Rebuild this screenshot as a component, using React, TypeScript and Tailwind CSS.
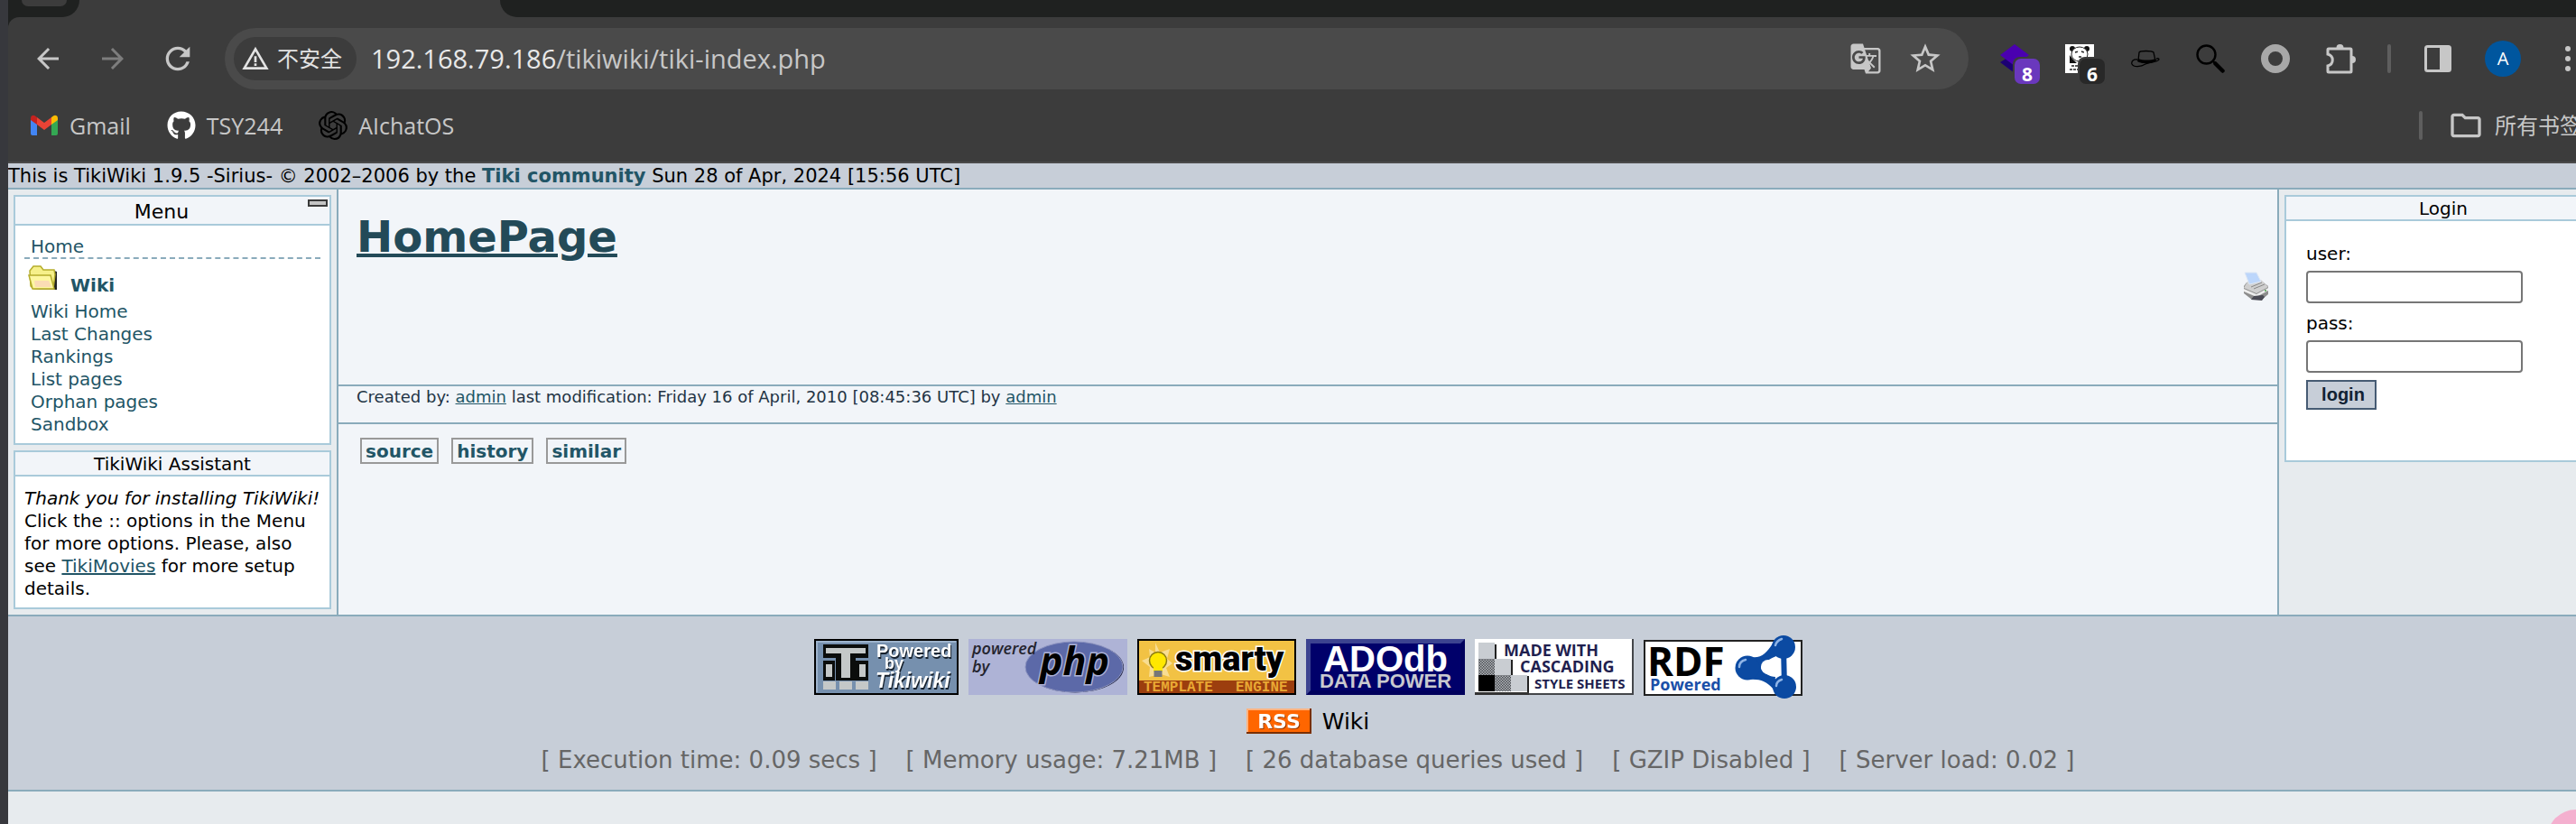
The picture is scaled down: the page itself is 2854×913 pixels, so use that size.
import type { ReactNode } from "react";
import { SiOpenai } from "react-icons/si";
import { FaGithub } from "react-icons/fa";
import {
  MdArrowBack,
  MdArrowForward,
  MdGTranslate,
  MdOutlineFolder,
  MdRefresh,
  MdStarBorder,
  MdWarningAmber,
} from "react-icons/md";

const LINK = "text-[#225566]";

function ToolCell({ label, children }: { label: string; children: ReactNode }) {
  return (
    <button aria-label={label} className="flex h-12 w-[72px] shrink-0 items-center justify-center">
      {children}
    </button>
  );
}

function GmailIcon() {
  return (
    <svg viewBox="0 0 32 24" className="h-6 w-8">
      <path d="M1 4v17a2 2 0 0 0 2 2h5V9z" fill="#4285f4" />
      <path d="M31 4v17a2 2 0 0 1-2 2h-5V9z" fill="#34a853" />
      <path d="M24 3v8l7-5V4c0-3-3-4-5-2.500z" fill="#fbbc04" />
      <path d="M8 11V3l8 6 8-6v8l-8 6z" fill="#ea4335" />
      <path d="M1 4v2l7 5V3L6 1.500C4 0 1 1 1 4z" fill="#c5221f" />
    </svg>
  );
}

function LayersIcon() {
  return (
    <svg viewBox="-10 -6 62 56" className="h-14 w-[62px] shrink-0">
      <path d="M4 26 20 16l16 10-16 12z" fill="#1c0074" />
      <path d="M20 6 36 18 20 30 4 18z" fill="#4a00b0" />
      <rect x="18" y="20" width="32" height="32" rx="8" fill="#3c3c3c" />
      <rect x="20" y="22" width="28" height="28" rx="7" fill="#6a38bd" />
      <text x="34" y="47" textAnchor="middle" fontSize="21" fontWeight="700" fontFamily="Open Sans, sans-serif" fill="#fff">8</text>
    </svg>
  );
}

function PandaIcon() {
  return (
    <svg viewBox="-10 -6 62 56" className="h-14 w-[62px] shrink-0">
      <rect x="4" y="6" width="32" height="32" fill="#fff" />
      <circle cx="12" cy="11" r="3" fill="#111" />
      <circle cx="28" cy="11" r="3" fill="#111" />
      <path d="M9 18v9h8l-4-4z" fill="#111" />
      <ellipse cx="20" cy="17" rx="9" ry="8" fill="#fff" stroke="#222" strokeWidth="1" />
      <path d="M15 15l4-1M22 14l3 1M19 20h4M11 30h10M9 34h9" stroke="#222" strokeWidth="1.500" strokeDasharray="3 1" />
      <rect x="18" y="20" width="32" height="32" rx="8" fill="#3c3c3c" />
      <rect x="20" y="22" width="28" height="28" rx="7" fill="#282828" />
      <text x="34" y="47" textAnchor="middle" fontSize="21" fontWeight="700" fontFamily="Open Sans, sans-serif" fill="#fff">6</text>
    </svg>
  );
}

function HatIcon() {
  return (
    <svg viewBox="0 0 32 20" className="h-5 w-8">
      <path d="M8 12 9 3c1-2 14-2 16 0l2 9c-4 3-14 4-19 0z" fill="none" stroke="#000" strokeWidth="1.300" />
      <path d="M8 10c5 2 14 2 19 0l1 2c-5 4-16 4-21 1z" fill="#000" />
      <path d="M7 11c-4-1-7 2-6 5 2 4 10 3 15 0 4-2 13-2 15-5 0-2-2-1-3-1" fill="none" stroke="#000" strokeWidth="1.300" />
    </svg>
  );
}

function MagnifierIcon() {
  return (
    <svg viewBox="0 0 32 32" className="size-8">
      <circle cx="11.500" cy="11.500" r="10" fill="none" stroke="#000" strokeWidth="2.400" />
      <path d="m18 18 4 4" stroke="#000" strokeWidth="2.400" />
      <path d="m21.500 21.500 8 8" stroke="#000" strokeWidth="4.500" strokeLinecap="round" />
    </svg>
  );
}

function PuzzleIcon() {
  return (
    <svg viewBox="0 0 36 36" className="size-9">
      <path
        d="M5 7h24a1 1 0 0 1 1 1v24a1 1 0 0 1-1 1H5a1 1 0 0 1-1-1v-6c7-2 7-11 0-13V8a1 1 0 0 1 1-1z"
        fill="none"
        stroke="#c7c7c7"
        strokeWidth="3"
      />
      <path d="M13.500 6a4 4 0 0 1 8 0zM31 15a4 4 0 0 1 0 8z" fill="#c7c7c7" />
    </svg>
  );
}

function PanelIcon() {
  return (
    <svg viewBox="0 0 30 30" className="size-[30px]">
      <rect x="1.500" y="1.500" width="27" height="27" rx="2" fill="none" stroke="#c7c7c7" strokeWidth="3" />
      <rect x="17" y="2" width="12" height="26" fill="#c7c7c7" />
    </svg>
  );
}

function FolderIcon() {
  return (
    <svg viewBox="0 0 32 28" className="h-7 w-8 shrink-0">
      <path d="M6 27h26V7l-3-1-2 18z" fill="#222" />
      <path d="M3 23 2 6l4-5h8l3 4h12l1 5-2 16H6z" fill="#f6f08a" stroke="#b5ad2c" strokeWidth="1.500" />
      <path d="M1 11h24l4 15H5z" fill="#fdf7a0" stroke="#b5ad2c" strokeWidth="1.500" />
      <path d="M7 17h16l3 7H8z" fill="#fbdcb4" />
    </svg>
  );
}

function PrinterIcon() {
  return (
    <svg viewBox="0 0 30 32" className="h-8 w-[30px]">
      <path d="M10 31 1 24v-8l3-4 16-2 8 6v9l-7 6z" fill="#8d8d8d" />
      <path d="M1 18 5 11l15-2 8 8-13 7z" fill="#cfcfcf" />
      <path d="M2 1h13l5 10-13 3z" fill="#bcd6fb" stroke="#dfe8f4" strokeWidth="1" />
      <path d="m1 19 14 6 13-7v3l-13 7-14-6z" fill="#ededed" />
      <path d="m9 17 12-5M12 19l12-5" stroke="#888" strokeWidth="1" />
      <path d="m9 31 3-4 10-1 2 2-3 4z" fill="#4b4b55" />
      <circle cx="25" cy="21" r="1" fill="#4aa04a" />
    </svg>
  );
}

function TikiBadge() {
  return (
    <svg viewBox="0 0 160 62" className="h-[62px] w-40">
      <rect x="1" y="1" width="158" height="60" fill="#7690ae" stroke="#000" strokeWidth="2" />
      <path d="M3 59V3h154" fill="none" stroke="#9db3cc" strokeWidth="2" />
      <path d="M10 6h50v15H46v25H24V21H10z" fill="#0b0d0c" />
      <path d="M13 10h44v6H40v27H30V16H13z" fill="#c4c8c8" />
      <path d="M10 24h13v22H10zM46 24h14v22H46z" fill="#0b0d0c" />
      <path d="M13 28h7v14h-7zM50 28h7v14h-7zM10 47h14v9H10zM28 47h14v9H28zM46 47h14v9H46z" fill="#c4c8c8" />
      <g fontFamily="Liberation Sans, sans-serif" fontWeight="700" fill="#fff" className="drop-shadow-[1px_2px_0_#16202c]">
        <text x="69" y="20" fontSize="20">Powered</text>
        <text x="78" y="33" fontSize="18">by</text>
        <text x="68" y="54" fontSize="23" fontStyle="italic">Tikiwiki</text>
      </g>
    </svg>
  );
}

function PhpBadge() {
  return (
    <svg viewBox="0 0 176 62" className="h-[62px] w-44">
      <rect width="176" height="62" fill="#aeb3d6" />
      <ellipse cx="118" cy="31.500" rx="54" ry="28" fill="#1c1f3d" />
      <ellipse cx="117" cy="31" rx="54" ry="28" fill="#5c69a8" stroke="#8c93c0" strokeWidth="1" />
      <g fontFamily="Open Sans, sans-serif" fontStyle="italic">
        <text x="4" y="17" fontSize="18" fontWeight="600" fill="#24242e">powered</text>
        <text x="4" y="37" fontSize="18" fontWeight="600" fill="#24242e">by</text>
        <text x="79" y="40" fontSize="43" fontWeight="700" fill="#000" stroke="#aeb3d6" strokeWidth="3" paintOrder="stroke">php</text>
      </g>
    </svg>
  );
}

function SmartyBadge() {
  return (
    <svg viewBox="0 0 176 62" className="h-[62px] w-44">
      <rect x="1" y="1" width="174" height="60" fill="#f2c244" stroke="#000" strokeWidth="2" />
      <rect x="2" y="46" width="172" height="14" fill="#9c3e0e" />
      <path d="m20 4 5 11 11-4-3 11 6 5-7 5 4 10-10-3-13 3 1-11-9-7 9-4-1-9 7 4z" fill="#f8dd92" />
      <circle cx="23" cy="24" r="9.500" fill="#ffe800" stroke="#8a7a10" strokeWidth="1.500" />
      <path d="M18 31h10v5H18z" fill="#ffe800" />
      <path d="M18.500 35h9v7h-9z" fill="#777" />
      <text x="42" y="35" fontSize="38" fontWeight="900" fontFamily="Roboto, sans-serif" fill="#000" stroke="#fff" strokeWidth="3" paintOrder="stroke">smarty</text>
      <g fontFamily="Liberation Mono, monospace" fontSize="16" fontWeight="700" fill="#e9a833">
        <text x="7" y="58">TEMPLATE</text>
        <text x="109" y="58">ENGINE</text>
      </g>
    </svg>
  );
}

function AdodbBadge() {
  return (
    <svg viewBox="0 0 176 62" className="h-[62px] w-44">
      <rect width="176" height="62" fill="#00005c" />
      <path d="M0 0h176l-5 5H5v52l-5 5z" fill="#3c4390" />
      <path d="M5 5h166v52H5z" fill="#00006a" />
      <g fontFamily="Liberation Sans, sans-serif" fontWeight="700">
        <text x="88" y="36" fontSize="40" textAnchor="middle" fill="#fff">ADOdb</text>
        <text x="88" y="54" fontSize="22" textAnchor="middle" fill="#c9c9cf">DATA POWER</text>
      </g>
    </svg>
  );
}

function CssBadge() {
  return (
    <svg viewBox="0 0 176 62" className="h-[62px] w-44">
      <defs>
        <pattern id="checks" width="3" height="3" patternUnits="userSpaceOnUse">
          <rect width="3" height="3" fill="#b4b8bd" />
          <path d="M0 0h1.500v1.500H0zM1.500 1.500H3V3H1.500z" fill="#4a4d52" />
        </pattern>
      </defs>
      <rect width="176" height="62" fill="#fff" />
      <path d="M175 0v61H0" fill="none" stroke="#44464a" strokeWidth="2" />
      <path d="M0 59h60v3H0z" fill="#333" />
      <path d="M22 6h2v16h-2zM40 23h2v17h-2zM58 41h2v18h-2z" fill="#222" />
      <path d="M4 4h18v18H4zM22 22h18v18H22zM40 40h18v18H40z" fill="#c9cdd2" />
      <path d="M4 22h18v18H4zM22 40h18v18H22z" fill="url(#checks)" />
      <path d="M4 40h18v18H4z" fill="#000" />
      <g fontFamily="Open Sans, sans-serif" fontWeight="700" fontSize="18" fill="#1f1f4f">
        <text x="32" y="19">MADE WITH</text>
        <text x="50" y="37">CASCADING</text>
        <text x="66" y="55" fontSize="15">STYLE SHEETS</text>
      </g>
    </svg>
  );
}

function RdfBadge() {
  return (
    <svg viewBox="0 0 176 72" className="h-[72px] w-44">
      <rect x="1" y="7" width="174" height="60" fill="#fff" stroke="#222" strokeWidth="2" />
      <path d="M115 37 155 14 156 58z" fill="#fff" stroke="#0b4aa2" strokeWidth="6" strokeLinejoin="round" />
      <g fill="#0b4aa2">
        <path d="M115 24c14 4 20-2 28-14l4 14c-6 2-16 8-17 13 1 5 10 10 16 10l-2 14c-8-10-16-12-29-11z" />
        <circle cx="115" cy="37" r="13.500" />
        <circle cx="155" cy="14" r="13" />
        <circle cx="156" cy="58" r="13" />
      </g>
      <circle cx="138" cy="36" r="8" fill="#fff" />
      <g fill="none" stroke="#8fb4e6" strokeWidth="2.500" strokeLinecap="round">
        <path d="M106 36c0-4 3-7 7-8M146 12c1-4 4-6 7-7M147 57c0-4 3-6 6-7" />
      </g>
      <text x="4" y="46" fontSize="44" fontWeight="700" fontFamily="Open Sans, sans-serif" fill="#000">RDF</text>
      <text x="7" y="62" fontSize="18" fontWeight="700" fontFamily="Open Sans, sans-serif" fill="#1a4fa8">Powered</text>
    </svg>
  );
}

function RssBadge() {
  return (
    <svg viewBox="0 0 72 28" className="h-7 w-[72px]">
      <rect width="72" height="28" fill="#7a2f00" />
      <rect width="70" height="26" fill="#ffb380" />
      <rect x="2" y="2" width="68" height="24" fill="#ff6600" />
      <text
        x="36"
        y="22"
        fontFamily="DejaVu Sans, sans-serif"
        fontWeight="700"
        fontSize="22"
        textAnchor="middle"
        fill="#fff"
        className="drop-shadow-[1px_1px_0_#9a3c00]"
      >
        RSS
      </text>
    </svg>
  );
}

function BrowserChrome() {
  return (
    <header className="bg-[#3c3c3c] font-['Open_Sans','Noto_Sans_CJK_SC',sans-serif] text-[#c7c7c7]">
      <div className="flex h-[19px] justify-between">
        <div className="w-[79px] rounded-br-[20px] bg-[#1f2120] pl-[15px]">
          <div className="h-[7px] w-[50px] rounded-b-xl bg-[#3c3c3c]" />
        </div>
        <div className="ml-[466px] flex-1 rounded-bl-[20px] bg-[#1f2120]" />
      </div>
      <div className="bg-[#1f2120]">
        <div className="flex items-center rounded-tl-xl bg-[#3c3c3c] py-3 pr-2 pl-2">
          <ToolCell label="Back">
            <MdArrowBack className="size-9" />
          </ToolCell>
          <ToolCell label="Forward">
            <MdArrowForward className="size-9 text-[#7d7d7d]" />
          </ToolCell>
          <ToolCell label="Reload">
            <MdRefresh className="size-10" />
          </ToolCell>
          <div className="mr-4 ml-4 flex h-[68px] flex-1 items-center rounded-full bg-[#4a4a4a] pr-7 pl-[10px]">
            <button className="flex h-12 items-center gap-2 rounded-full bg-[#3c3c3c] pr-4 pl-2 text-2xl text-[#e3e3e3]">
              <MdWarningAmber className="size-8" />
              不安全
            </button>
            <div className="ml-4 flex-1 text-[29px]">
              <span className="text-[#e8e8e8]">192.168.79.186</span>/tikiwiki/tiki-index.php
            </div>
            <button aria-label="Translate" className="mr-7">
              <MdGTranslate className="size-9" />
            </button>
            <button aria-label="Bookmark">
              <MdStarBorder className="size-10" />
            </button>
          </div>
          <ToolCell label="Layers extension">
            <LayersIcon />
          </ToolCell>
          <ToolCell label="Panda extension">
            <PandaIcon />
          </ToolCell>
          <ToolCell label="Hat extension">
            <HatIcon />
          </ToolCell>
          <ToolCell label="Search extension">
            <MagnifierIcon />
          </ToolCell>
          <ToolCell label="Ring extension">
            <span className="size-8 rounded-full border-8 border-[#a8a8a8]" />
          </ToolCell>
          <ToolCell label="Extensions">
            <PuzzleIcon />
          </ToolCell>
          <div className="flex w-9 shrink-0 justify-center">
            <span className="h-8 w-1 rounded-full bg-[#5e5e5e]" />
          </div>
          <ToolCell label="Side panel">
            <PanelIcon />
          </ToolCell>
          <ToolCell label="Profile">
            <span className="flex size-10 items-center justify-center rounded-full bg-[#00569e] text-xl text-white">A</span>
          </ToolCell>
          <ToolCell label="More">
            <span className="flex flex-col gap-[5px]">
              <span className="size-1.5 rounded-full bg-[#c7c7c7]" />
              <span className="size-1.5 rounded-full bg-[#c7c7c7]" />
              <span className="size-1.5 rounded-full bg-[#c7c7c7]" />
            </span>
          </ToolCell>
        </div>
      </div>
      <nav className="flex items-center gap-10 border-b-2 border-[#4a4a4a] pr-[29px] pb-3 pl-6 text-[25px] leading-[56px]">
        <a href="#gmail" className="flex items-center gap-3">
          <GmailIcon />
          Gmail
        </a>
        <a href="#github" className="flex items-center gap-3">
          <FaGithub className="size-8 text-white" />
          TSY244
        </a>
        <a href="#aichat" className="flex items-center gap-3">
          <SiOpenai className="size-8 text-black" />
          AIchatOS
        </a>
        <div className="ml-auto flex items-center">
          <span className="mr-7 h-8 w-1 rounded-full bg-[#5e5e5e]" />
          <button className="flex items-center gap-3 text-2xl leading-[56px]">
            <MdOutlineFolder className="size-10" />
            所有书签
          </button>
        </div>
      </nav>
    </header>
  );
}

function Module({ title, children }: { title: ReactNode; children: ReactNode }) {
  return (
    <section className="border-2 border-[#a9cada] bg-white">
      <div className="border-b-2 border-[#a9cada] bg-[#f2f5f9] text-center">{title}</div>
      {children}
    </section>
  );
}

function ModuleTitle({ children }: { children: ReactNode }) {
  return <h2 className="h-[25px] leading-[27px]">{children}</h2>;
}

const WIKI_LINKS = ["Wiki Home", "Last Changes", "Rankings", "List pages", "Orphan pages", "Sandbox"];
const PAGE_TABS = ["source", "history", "similar"];
const STATS = [
  "[ Execution time: 0.09 secs ]",
  "[ Memory usage: 7.21MB ]",
  "[ 26 database queries used ]",
  "[ GZIP Disabled ]",
  "[ Server load: 0.02 ]",
];

function LeftColumn() {
  return (
    <aside className="flex w-[366px] shrink-0 flex-col gap-1.5 border-r-2 border-[#8aabbb] p-1.5">
      <Module
        title={
          <div className="flex h-[30px] items-start">
            <h2 className="flex-1 text-[22px] leading-[34px]">Menu</h2>
            <button aria-label="Collapse menu" className="mt-[3px] mr-0.5 h-2 w-[22px] border-2 border-[#3a3a3a] bg-[#c4c4c4]" />
          </div>
        }
      >
        <nav className="px-2.5 pt-2.5 pb-2">
          <div className="h-[27px] border-b-2 border-dashed border-[#8aabbb] pl-[7px] leading-[27px]">
            <a href="#home" className={LINK}>Home</a>
          </div>
          <div className="flex h-[46px] gap-[15px] pt-[7px] pl-1">
            <FolderIcon />
            <a href="#wiki" className="pt-[10px] font-bold text-[#225566]">Wiki</a>
          </div>
          <ul className="pl-[7px]">
            {WIKI_LINKS.map((name) => (
              <li key={name}>
                <a href="#wiki" className={LINK}>{name}</a>
              </li>
            ))}
          </ul>
        </nav>
      </Module>
      <Module title={<ModuleTitle>TikiWiki Assistant</ModuleTitle>}>
        <p className="px-2.5 pt-3 pb-2">
          <i className="whitespace-nowrap">Thank you for installing TikiWiki!</i>
          <br />
          Click the :: options in the Menu
          <br />
          for more options. Please, also
          <br />
          see <a href="#movies" className="text-[#225566] underline">TikiMovies</a> for more setup
          <br />
          details.
        </p>
      </Module>
    </aside>
  );
}

function PageContent() {
  return (
    <main className="min-w-0 flex-1 bg-[#f2f5f9]">
      <div className="border-b-2 border-[#8aabbb] pt-6 pr-2 pb-[93px] pl-5">
        <h1 className="text-5xl leading-[56px] font-bold">
          <a href="#homepage" className="text-[#234a58] underline decoration-4">HomePage</a>
        </h1>
        <div className="mt-[11px] flex justify-end">
          <button aria-label="Print">
            <PrinterIcon />
          </button>
        </div>
      </div>
      <p className="border-b-2 border-[#8aabbb] pb-[17px] pt-px pl-5 text-lg leading-[22px] text-[#223344]">
        Created by: <a href="#admin" className="text-[#225566] underline">admin</a> last modification: Friday 16 of April, 2010
        [08:45:36 UTC] by <a href="#admin" className="text-[#225566] underline">admin</a>
      </p>
      <div className="flex gap-3.5 pt-[15px] pl-6">
        {PAGE_TABS.map((tab) => (
          <a key={tab} href="#tab" className="h-[29px] border-2 border-[#999] px-1 leading-[27px] font-bold text-[#225566]">{tab}</a>
        ))}
      </div>
    </main>
  );
}

function LoginColumn() {
  return (
    <aside className="w-[366px] shrink-0 border-l-2 border-[#8aabbb] p-1.5">
      <Module title={<ModuleTitle>Login</ModuleTitle>}>
        <form className="flex flex-col items-start px-[22px] pt-6 pb-14">
          <label htmlFor="user">user:</label>
          <input id="user" className="mt-1.5 h-9 w-60 rounded-[4px] border-2 border-[#767676] bg-white px-1" />
          <label htmlFor="pass" className="mt-2.5">pass:</label>
          <input id="pass" type="password" className="mt-1.5 h-9 w-60 rounded-[4px] border-2 border-[#767676] bg-white px-1" />
          <button
            type="button"
            className="mt-2 h-[33px] w-[78px] border-2 border-[#465b73] bg-[#c7ced8] pl-1 font-['Liberation_Sans',sans-serif] font-bold text-[#112233]"
          >
            login
          </button>
        </form>
      </Module>
    </aside>
  );
}

export default function App() {
  return (
    <div className="flex min-h-screen overflow-hidden bg-[#e7ebee]">
      <div className="w-[9px] shrink-0 bg-[#37383d]" />
      <div className="relative min-w-0 flex-1 overflow-hidden">
        <div className="w-[calc(100%+35px)]">
          <BrowserChrome />
          <div className="font-['DejaVu_Sans',sans-serif] text-xl leading-[25px] text-black">
            <div className="h-[29px] border-b-2 border-[#8aabbb] bg-[#c7ced8] text-[21px] leading-[29px]">
              This is TikiWiki 1.9.5 -Sirius- © 2002–2006 by the{" "}
              <a href="#community" className="font-bold text-[#225566]">Tiki community</a> Sun 28 of Apr, 2024 [15:56 UTC]
            </div>
            <div className="flex">
              <LeftColumn />
              <PageContent />
              <LoginColumn />
            </div>
            <footer className="flex flex-col items-center border-y-2 border-[#8aabbb] bg-[#c7ced8] pt-5 pb-[7px]">
              <div className="flex items-center gap-[11px]">
                <TikiBadge />
                <PhpBadge />
                <SmartyBadge />
                <AdodbBadge />
                <CssBadge />
                <RdfBadge />
              </div>
              <div className="mt-2.5 flex h-7 items-center gap-3 text-[25px]">
                <RssBadge />
                <a href="#rss">Wiki</a>
              </div>
              <div className="flex gap-8 pt-3 pb-2 text-[26px] leading-[35px] text-[#666]">
                {STATS.map((stat) => (
                  <span key={stat}>{stat}</span>
                ))}
              </div>
            </footer>
          </div>
        </div>
        <div className="absolute -right-8 -bottom-12 size-16 rounded-full bg-[#f4b0cf]" />
      </div>
    </div>
  );
}
